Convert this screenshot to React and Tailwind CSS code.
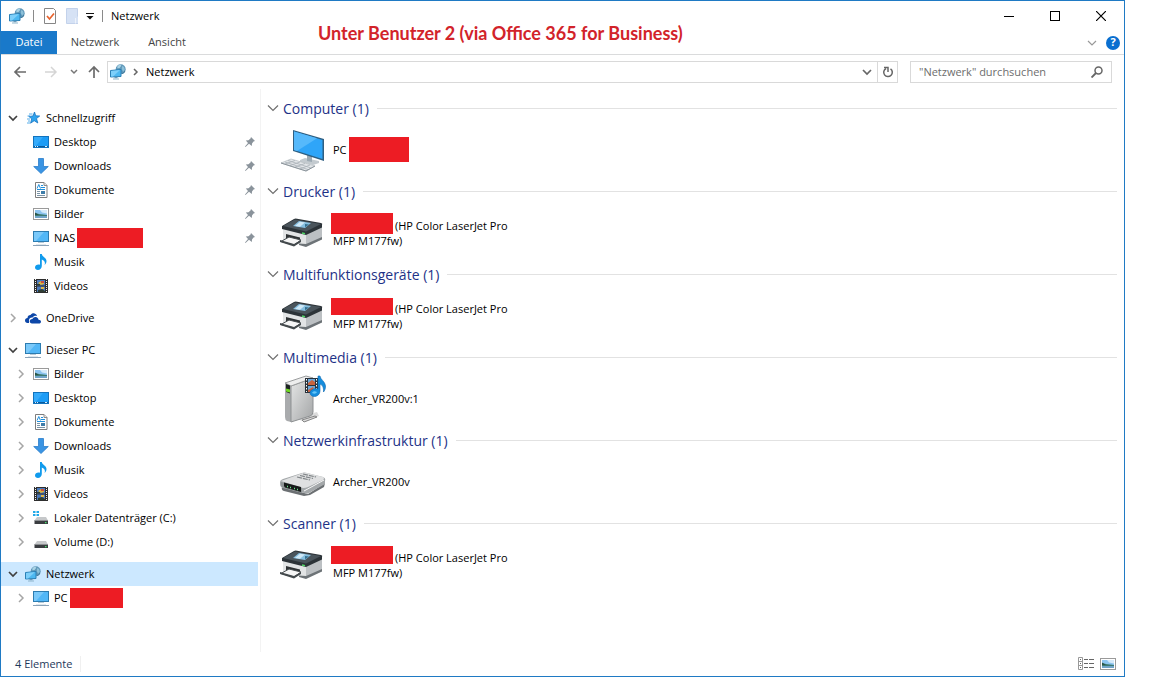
import React, { useState } from 'react';

const NetworkIcon = () => (
  <svg width="16" height="16" viewBox="0 0 16 16" className="shrink-0">
    <circle cx="10.7" cy="5.2" r="5" fill="#5f97b8" />
    <path d="M7.500 1.800l2.800-1.400 1 1.400-1.800 2.200-2.200.2z" fill="#a9d3e6" />
    <path d="M12 2l2 1 .8 2.500-1.600 2.300-1.400-2.600z" fill="#8cc0d9" />
    <path d="M12 9.500l1.800-.6 1-1.800" fill="none" stroke="#3f7697" />
    <path d="M.500 6.500l10.500-1v7L.500 13z" fill="#4db8f1" stroke="#2a7fb5" />
    <path d="M1 7l9-.9L3 12.400H1z" fill="#7dcffa" />
    <path d="M4.500 13h3v1.200h-3z" fill="#6b9ab8" />
    <path d="M3 14.500h6v1H3z" fill="#8fb4ca" />
  </svg>
);

const StarIcon = () => (
  <svg width="16" height="16" viewBox="0 0 16 16" className="shrink-0">
    <path d="M9.500 2l1.200 3.800 4 .2-3.200 2.600 1.300 4.400-3.600-2.300L5.600 13.200l1.100-4.400L3.800 6.400l4.200-.4z" fill="#2fa4ee" stroke="#1673c2" strokeWidth="0.800" />
    <path d="M4 4h3.500M2.500 6H5M2 9h3M3 11h2M2 13h3" stroke="#45a5e6" strokeWidth="0.900" />
  </svg>
);

const DesktopIcon = () => (
  <svg width="16" height="16" viewBox="0 0 16 16" className="shrink-0">
    <rect x="0.5" y="2.5" width="15" height="11" fill="#1c9cf6" stroke="#1273bd" />
    <path d="M1 3h9L3 12H1z" fill="#35abfb" />
    <path d="M1 12.500h14" stroke="#0b5a9b" />
    <path d="M2 12.500h1M4 12.500h1M12 12.500h2" stroke="#d8efff" />
  </svg>
);

const DownloadIcon = () => (
  <svg width="16" height="16" viewBox="0 0 16 16" className="shrink-0">
    <path d="M5.500.500h5v8h4.800L8 15.500.700 8.500h4.800z" fill="#3a94e3" stroke="#2a7ecb" strokeWidth="0.800" />
  </svg>
);

const DocumentIcon = () => (
  <svg width="16" height="16" viewBox="0 0 16 16" className="shrink-0">
    <path d="M2.500.500h8.500l3 3v12H2.500z" fill="#fff" stroke="#7d7d7d" />
    <path d="M11 .500v3h3" fill="#e9e9e9" stroke="#8c8c8c" />
    <path d="M4 6.500l1.800-4L7.500 6.500M8 3.500h2M8 5.500h4M4 7.500h8" fill="none" stroke="#1f8fdc" />
    <path d="M4 9.500h3M4 11.500h3M4 13.500h8" stroke="#7a93a6" />
    <path d="M8 9h4v3H8z" fill="#3f7da9" />
  </svg>
);

const PictureIcon = () => (
  <svg width="16" height="16" viewBox="0 0 16 16" className="shrink-0">
    <rect x="0.5" y="2.5" width="15" height="11" fill="#fff" stroke="#9a9a9a" />
    <path d="M2 4h12v8H2z" fill="#8cc4f0" />
    <path d="M7 4h7v3.500L9 6.500z" fill="#d5eafa" />
    <path d="M2 7l4 1 8 1v1H2z" fill="#3d7a72" />
    <path d="M2 6.500l4 2.500H2z" fill="#2a5348" />
    <path d="M2 10h12v2H2z" fill="#6fa3c8" />
  </svg>
);

const MonitorIcon = () => (
  <svg width="16" height="16" viewBox="0 0 16 16" className="shrink-0">
    <rect x="0.5" y="1.5" width="15" height="10" fill="#52b7f7" stroke="#2d7cb0" />
    <path d="M1 2h10L3 11H1z" fill="#7ac9fa" />
    <path d="M5 13h6v-1H5z" fill="#b9cbd8" />
    <path d="M0 15.500h16" stroke="#8ba3b8" />
    <path d="M3 14.500h10" stroke="#dfe7ed" />
  </svg>
);

const MusicIcon = () => (
  <svg width="16" height="16" viewBox="0 0 16 16" className="shrink-0">
    <path d="M7 0h1.800c.2 2.500 4.600 3.600 4.700 7 .1 1.700-.9 3.300-1.900 4 .9-2.500.1-4.500-2.800-5.500V12c0 2.200-1.700 4-3.900 4C3.200 16 2 15 2 13.500 2 11.800 3.600 10.500 5.500 10.500c.6 0 1.100.1 1.500.3z" fill="#119bed" />
  </svg>
);

const VideoIcon = () => (
  <svg width="16" height="16" viewBox="0 0 16 16" className="shrink-0">
    <path d="M1 1h14v14H1z" fill="#2e2e2e" />
    <path d="M2.500 1v14M13.500 1v14" stroke="#f2f2f2" strokeDasharray="1 1" />
    <path d="M4 2h8v5.500H4zM4 8.500h8V14H4z" fill="#4a79bd" />
    <path d="M5 5l3-2 3 1v2l-3 1z" fill="#d9b33d" />
    <path d="M8 3h3v2H8z" fill="#cb5040" />
    <path d="M4 6h3v1.500H4zM5 12l4-1 3 2v1H5z" fill="#2f3e33" />
    <path d="M8 9h3v2H8z" fill="#e0b84a" />
  </svg>
);

const CloudIcon = () => (
  <svg width="16" height="16" viewBox="0 0 16 16" className="shrink-0">
    <path d="M4 13H2.500C1 13 0 12 0 10.500 0 9 1 8 2.500 8c0-2 1.200-3 3-3C6.500 3.500 8 3 9.500 3.400c1.500.4 2.400 1.400 2.600 2.600-2-.5-3.600.2-4.500 1.500C5.500 7.200 4 8.600 4 10.500z" fill="#0d47a8" />
    <path d="M7 13.500c-1.400 0-2.300-.9-2.300-2.200 0-1.500 1.100-2.500 2.700-2.400C8 7.500 9.200 6.800 10.500 6.900c1.800.1 2.900 1.300 3 2.800 1.500 0 2.500.7 2.500 2 0 1.200-.9 1.800-2 1.800z" fill="#0d47a8" />
  </svg>
);

const DriveIcon = ({ system }) => (
  <svg width="16" height="16" viewBox="0 0 16 16" className="shrink-0">
    {system && <path d="M0 1h2.500v2H0zM3.500 1H6v2H3.500zM0 4h2.500v2H0zM3.500 4H6v2H3.500z" fill="#21a9e8" />}
    <path d="M4 7h9l2 3.500H1.500z" fill="#c6c8ca" />
    <path d="M1.500 10.500H15V14H1.500z" fill="#3a3d40" />
    <path d="M1.500 10.500H15" stroke="#8c8f92" />
    <path d="M12 12h1.500v1.200H12z" fill="#45e06a" />
  </svg>
);

const PinIcon = () => (
  <svg width="12" height="12" viewBox="0 0 12 12" className="shrink-0">
    <path d="M7 1l4 4-1.500.5L8 7.500l-.2 2.500L5 7.800 1.500 11 1 10.500 4 7 1.800 4.500l2.700-.2L6.500 2.500z" fill="#8a939b" />
  </svg>
);

const Chevron = ({ open }) => (
  <svg width="16" height="16" viewBox="0 0 16 16" fill="none" className="shrink-0">
    {open ? (
      <path d="M4 6l4 4 4-4" stroke="#404040" strokeWidth="1.700" />
    ) : (
      <path d="M6 4l4 4-4 4" stroke="#a6a6a6" strokeWidth="1.500" />
    )}
  </svg>
);

const ComputerLarge = () => (
  <svg width="48" height="48" viewBox="0 0 48 48" className="shrink-0">
    <path d="M20 34l5-2 14 3v2l-6 2-13-3z" fill="#c3cacf" />
    <path d="M27 29l5 1v6l-5-1z" fill="#9daab3" />
    <path d="M13 4l31 9v22L13 25z" fill="#2f5f82" />
    <path d="M14 5.500L42.500 14v19L14 24z" fill="#2fa5f8" />
    <path d="M14 5.500L37 12.300 17 25l-3-1z" fill="#56b9fb" />
    <path d="M11 33l24 7-9 5-25-8z" fill="#e3e6e9" stroke="#b3babf" strokeWidth="0.7" />
    <path d="M8 34.500l23 7.500M5 36l23 7.500M15 34.500L5 38M20 36l-10 3.500M25 37.500L15 41M30 39l-10 4" stroke="#a9b1b7" strokeWidth="0.8" />
    <path d="M1 37l25 8 9-5" fill="none" stroke="#8b949b" />
  </svg>
);

const PrinterLarge = () => (
  <svg width="48" height="48" viewBox="0 0 48 48" className="shrink-0">
    <path d="M3 19l23 5v13L3 31z" fill="#e2e4e5" />
    <path d="M26 24l16-7v13L26 37z" fill="#bcc0c3" />
    <path d="M26 35l16-7v2.500L26 38l-7-2v-1.500z" fill="#6d7377" />
    <path d="M2 17l12-7q1-.6 3-.3L41 14q2 .5 1 2v2.500L26 26 2 20z" fill="#2c3338" />
    <path d="M3 17l12-6.500L41 15l-15 7.500z" fill="#4a545b" />
    <path d="M19 12l12 2-6 5-12-2z" fill="#86bfe0" />
    <path d="M20 12.700l5 .9-5 4.200-5-.8z" fill="#cfe8f6" />
    <path d="M25 15l4 .6-4 2.600z" fill="#34708f" />
    <path d="M6 25l14 3.500v4L6 29z" fill="#2f3335" />
    <path d="M9 28l12 3-7 5-13-3.500z" fill="#f6f6f6" stroke="#444a4d" />
    <path d="M0 31l14 4 7-4v2l-7 4.500L0 33z" fill="#444a4d" />
    <path d="M22 24l3 .7" stroke="#51d666" strokeWidth="1.500" />
  </svg>
);

const MediaLarge = () => (
  <svg width="48" height="48" viewBox="0 0 48 48" className="shrink-0">
    <defs>
      <linearGradient id="boxSide" x1="0" y1="0" x2="1" y2="1">
        <stop offset="0" stopColor="#e6e7e7" />
        <stop offset="1" stopColor="#a3a5a6" />
      </linearGradient>
    </defs>
    <path d="M26 40l11-3 2 4-14 6-8-3z" fill="#dcdcdc" />
    <path d="M22 45l13-4 2 1-13 5z" fill="none" stroke="#858585" />
    <path d="M5 8l6 2v37l-4-1q-2-1-2-4z" fill="#a9abad" />
    <path d="M11 11l22-8v34q0 3-3 4l-19 6z" fill="url(#boxSide)" stroke="#8d9092" />
    <path d="M5 8l21-7 7 2-22 8z" fill="#eee" stroke="#9b9d9e" />
    <path d="M6 9l4 1.500v8L6 17z" fill="#1f2523" />
    <path d="M6 13.500l4 1v3l-4-1z" fill="#70d723" />
    <path d="M25 3h13v15H25z" fill="#29323b" />
    <path d="M26.500 4v13M36.500 4v13" stroke="#fff" strokeDasharray="1.500 1.500" />
    <path d="M28 4h7v6h-7zM28 11h7v6h-7z" fill="#6ea8d9" />
    <path d="M28 8l4-3 3 2v3h-7zM28 15l5-3 2 5h-7z" fill="#c9633e" />
    <path d="M38 1h2c.5 4 5 5 5.500 10 .2 2.500-1 5-2 6 .3-4-.5-7-3.500-8v7c0 3-2.500 5.500-5.500 5.500-2.500 0-4.500-1.500-4.500-3.500 0-3 3.500-5 8-4z" fill="#168ddd" stroke="#0c68b2" strokeWidth="0.6" />
    <path d="M32 18c1-2 3-2 5-1-1 2-3 2-5 1z" fill="#65c6fa" />
  </svg>
);

const RouterLarge = () => (
  <svg width="48" height="48" viewBox="0 0 48 48" className="shrink-0">
    <path d="M2 29l26 7 17-11-1 4-14 8-6 1-20-5q-3-1-2-4z" fill="#6c7073" />
    <path d="M0 24q0-2 3-3l19-6q2-1 5 0l16 4q3 1 2 4v3L29 35q-2 1-5 0L3 30q-3-1-3-4z" fill="#a4a8aa" />
    <path d="M1 23l22-8q2-1 4 0l16 4q2 1 0 3l-15 7q-2 1-5 1z" fill="#dfe0e1" />
    <path d="M1 24l21 6v5L4 30q-3-1-3-3z" fill="#8f9496" />
    <path d="M4 24.500l17 4.500v5L5 29.500q-1-1-1-2z" fill="#151918" />
    <path d="M7 28.500h1M10 29.500h1M14 30.500h1M17 31.500h1" stroke="#6ce08a" strokeWidth="1.500" />
    <path d="M17 19l13 3M20 17.500l13 3M23 16l13 3" stroke="#7f8487" strokeWidth="1.200" strokeDasharray="5 1" />
    <path d="M24 33l20-11" stroke="#f7f7f7" />
  </svg>
);

const quickAccess = [
  { label: 'Desktop', Icon: DesktopIcon, pinned: true },
  { label: 'Downloads', Icon: DownloadIcon, pinned: true },
  { label: 'Dokumente', Icon: DocumentIcon, pinned: true },
  { label: 'Bilder', Icon: PictureIcon, pinned: true },
  { label: 'NAS', Icon: MonitorIcon, pinned: true, mask: 'w-[66px]' },
  { label: 'Musik', Icon: MusicIcon },
  { label: 'Videos', Icon: VideoIcon },
];

const thisPc = [
  { label: 'Bilder', Icon: PictureIcon },
  { label: 'Desktop', Icon: DesktopIcon },
  { label: 'Dokumente', Icon: DocumentIcon },
  { label: 'Downloads', Icon: DownloadIcon },
  { label: 'Musik', Icon: MusicIcon },
  { label: 'Videos', Icon: VideoIcon },
  { label: 'Lokaler Datenträger (C:)', Icon: () => <DriveIcon system /> },
  { label: 'Volume (D:)', Icon: DriveIcon },
];

const tree = [
  { label: 'Schnellzugriff', Icon: StarIcon, open: true, children: quickAccess, leaf: true },
  { label: 'OneDrive', Icon: CloudIcon, children: [] },
  { label: 'Dieser PC', Icon: MonitorIcon, open: true, children: thisPc },
  {
    label: 'Netzwerk',
    Icon: NetworkIcon,
    open: true,
    selected: true,
    children: [{ label: 'PC', Icon: MonitorIcon, mask: 'w-[53px]' }],
  },
];

const groups = [
  { title: 'Computer', Icon: ComputerLarge, name: 'PC', mask: 'w-[60px] h-[25px]' },
  { title: 'Drucker', Icon: PrinterLarge, printer: true, mask: 'w-[62px] h-[21px]' },
  { title: 'Multifunktionsgeräte', Icon: PrinterLarge, printer: true, mask: 'w-[62px] h-[17px]' },
  { title: 'Multimedia', Icon: MediaLarge, name: 'Archer_VR200v:1' },
  { title: 'Netzwerkinfrastruktur', Icon: RouterLarge, name: 'Archer_VR200v' },
  { title: 'Scanner', Icon: PrinterLarge, printer: true, mask: 'w-[62px] h-[18px]' },
];

const TitleBar = () => (
  <header className="flex h-[30px] items-center gap-2 pl-2">
    <NetworkIcon />
    <span className="h-3 w-px bg-[#8a8a8a]" />
    <button aria-label="Eigenschaften">
      <svg width="16" height="16" viewBox="0 0 16 16">
        <path d="M2.500.500h9l2 2v13h-11z" fill="#fff" stroke="#868686" />
        <path d="M5 8l2.500 3L12 5.500" fill="none" stroke="#e8622c" strokeWidth="1.700" />
      </svg>
    </button>
    <button aria-label="Neuer Ordner">
      <svg width="12" height="16" viewBox="0 0 12 16">
        <path d="M.500.500h11v8l1 1v6H.500z" fill="#d6e2f5" stroke="#c3d2eb" />
        <path d="M9.500 10v5.500" stroke="#eef3fb" />
      </svg>
    </button>
    <button aria-label="Symbolleiste anpassen">
      <svg width="8" height="8" viewBox="0 0 8 8">
        <path d="M0 1.500h8" stroke="#111" />
        <path d="M.500 4h7L4 7.500z" fill="#111" />
      </svg>
    </button>
    <span className="h-3 w-px bg-[#8a8a8a]" />
    <h1>Netzwerk</h1>
    <div className="ml-auto flex h-full">
      <button aria-label="Minimieren" className="flex w-[46px] items-center justify-center">
        <svg width="10" height="10" viewBox="0 0 10 10"><path d="M0 5.500h10" stroke="#000" /></svg>
      </button>
      <button aria-label="Maximieren" className="flex w-[46px] items-center justify-center">
        <svg width="10" height="10" viewBox="0 0 10 10"><rect x="0.5" y="0.5" width="9" height="9" fill="none" stroke="#000" /></svg>
      </button>
      <button aria-label="Schließen" className="flex w-[46px] items-center justify-center">
        <svg width="10" height="10" viewBox="0 0 10 10"><path d="M0 0l10 10M10 0L0 10" stroke="#000" strokeWidth="1.200" /></svg>
      </button>
    </div>
  </header>
);

const Ribbon = () => (
  <div className="flex h-6 border-b border-[#dadbdc] text-[#444]">
    <button className="w-14 bg-[#1979ca] text-white">Datei</button>
    <button className="w-[76px]">Netzwerk</button>
    <button className="w-[68px]">Ansicht</button>
    <div className="ml-auto flex items-center gap-2 pr-1">
      <button aria-label="Menüband einblenden">
        <svg width="12" height="12" viewBox="0 0 12 12"><path d="M2 4l4 4 4-4" fill="none" stroke="#999" strokeWidth="1.200" /></svg>
      </button>
      <button
        aria-label="Hilfe"
        className="flex size-[14px] items-center justify-center rounded-full bg-[#0a6fd0] text-[11px] font-bold text-white"
      >
        ?
      </button>
    </div>
  </div>
);

const AddressBar = () => (
  <div className="flex h-[34px] items-center pr-3">
    <div className="flex w-[106px] items-center justify-between pr-[6px] pl-3">
      <button aria-label="Zurück">
        <svg width="14" height="14" viewBox="0 0 14 14"><path d="M13 7H2M7 2L2 7l5 5" fill="none" stroke="#6b6b6b" strokeWidth="1.700" /></svg>
      </button>
      <button aria-label="Vorwärts" className="ml-2">
        <svg width="14" height="14" viewBox="0 0 14 14"><path d="M1 7h11M7 2l5 5-5 5" fill="none" stroke="#d5d5d5" strokeWidth="1.500" /></svg>
      </button>
      <button aria-label="Zuletzt besuchte Orte" className="ml-1">
        <svg width="8" height="8" viewBox="0 0 8 8"><path d="M1 2l3 3 3-3" fill="none" stroke="#777" strokeWidth="1.500" /></svg>
      </button>
      <button aria-label="Nach oben">
        <svg width="14" height="14" viewBox="0 0 14 14"><path d="M7 13V2M2 7l5-5 5 5" fill="none" stroke="#6b6b6b" strokeWidth="1.700" /></svg>
      </button>
    </div>
    <div className="flex h-[22px] grow items-center border border-[#d9d9d9] pl-[2px]">
      <NetworkIcon />
      <svg width="8" height="8" viewBox="0 0 8 8" className="mx-[6px]"><path d="M2 1l3 3-3 3" fill="none" stroke="#666" strokeWidth="1.500" /></svg>
      <button>Netzwerk</button>
      <button aria-label="Vorherige Orte" className="ml-auto flex h-full w-5 items-center justify-center">
        <svg width="10" height="10" viewBox="0 0 10 10"><path d="M1 3l4 4 4-4" fill="none" stroke="#666" strokeWidth="1.700" /></svg>
      </button>
      <button aria-label="Aktualisieren" className="flex h-full w-5 items-center justify-center border-l border-[#d9d9d9]">
        <svg width="12" height="12" viewBox="0 0 12 12">
          <path d="M8.500 2.800A4.300 4.300 0 1 1 4 2.500" fill="none" stroke="#666" strokeWidth="1.500" />
          <path d="M2 1.500h4V6" fill="none" stroke="#666" strokeWidth="1.500" />
        </svg>
      </button>
    </div>
    <label className="ml-3 flex h-[22px] w-[202px] items-center border border-[#d9d9d9] pr-2 pl-2">
      <input
        type="search"
        aria-label="Netzwerk durchsuchen"
        placeholder={'"Netzwerk" durchsuchen'}
        className="min-w-0 grow bg-transparent outline-none placeholder:text-[#6d6d6d]"
      />
      <svg width="12" height="12" viewBox="0 0 12 12">
        <circle cx="7.5" cy="4.5" r="3.5" fill="none" stroke="#666" strokeWidth="1.500" />
        <path d="M5 7L.500 11.500" stroke="#666" strokeWidth="1.900" />
      </svg>
    </label>
  </div>
);

const TreeRow = ({ item, child, leaf, open, onToggle }) => {
  const { label, Icon, mask, pinned, selected } = item;
  return (
    <div className={`mr-[2px] flex h-6 items-center ${child ? 'pl-3' : 'pl-1'} ${selected ? 'bg-[#cce8ff]' : ''}`}>
      {leaf ? (
        <span className="w-4" />
      ) : (
        <button aria-label={`${label} umschalten`} aria-expanded={!!open} onClick={onToggle}>
          <Chevron open={open} />
        </button>
      )}
      <a href="#" className="ml-1 flex items-center gap-[5px] whitespace-nowrap">
        <Icon />
        {label}
      </a>
      {mask && <span className={`ml-[2px] h-5 bg-[#ed1c24] ${mask}`} />}
      {pinned && (
        <span className="mr-[2px] ml-auto">
          <PinIcon />
        </span>
      )}
    </div>
  );
};

const TreeSection = ({ section }) => {
  const [open, setOpen] = useState(!!section.open);
  return (
    <li>
      <TreeRow item={section} open={open} onToggle={() => setOpen(!open)} />
      {open && (
        <ul>
          {section.children.map((item) => (
            <li key={item.label}>
              <TreeRow item={item} child leaf={section.leaf} />
            </li>
          ))}
        </ul>
      )}
    </li>
  );
};

const DeviceGroup = ({ group }) => {
  const { title, Icon, name, printer, mask } = group;
  const [open, setOpen] = useState(true);
  return (
    <section>
      <h2 className="flex h-6 items-center gap-2 pr-[7px] pl-[6px] text-[14px] text-[#1e3287]">
        <button className="flex items-center gap-1 whitespace-nowrap" aria-expanded={open} onClick={() => setOpen(!open)}>
          <svg width="12" height="12" viewBox="0 0 12 12"><path d="M1 3.500l5 5 5-5" fill="none" stroke="#707070" strokeWidth="1.200" /></svg>
          {title} (1)
        </button>
        <span className="h-px grow bg-[#e2e2e2]" />
      </h2>
      {open && (
        <div className="flex h-[59px] items-center gap-[5px] pl-[19px] leading-[15px]">
          <Icon />
          {printer ? (
            <p className="whitespace-nowrap">
              <span className="-ml-[2px] flex h-[15px] items-center gap-[2px]">
                <span className={`-mt-1 shrink-0 bg-[#ed1c24] ${mask}`} />
                (HP Color LaserJet Pro
              </span>
              MFP M177fw)
            </p>
          ) : (
            <p className="flex items-center gap-[2px]">
              {name}
              {mask && <span className={`bg-[#ed1c24] ${mask}`} />}
            </p>
          )}
        </div>
      )}
    </section>
  );
};

const StatusBar = () => (
  <footer className="flex h-6 items-center pr-2 pl-[14px] text-[#1e395b]">
    <span>4 Elemente</span>
    <span className="ml-2 h-4 w-px bg-[#f0f0f0]" />
    <div className="ml-auto flex items-center gap-[6px]">
      <button aria-label="Details">
        <svg width="16" height="14" viewBox="0 0 16 14">
          <path d="M.500.500h4v12h-4zM.500 4.500h4M.500 8.500h4" fill="none" stroke="#999" />
          <path d="M2 2.500h1M2 6.500h1M2 10.500h1M6 2.500h4M11 2.500h5M6 6.500h4M11 6.500h5M6 10.500h4M11 10.500h5" stroke="#666" />
        </svg>
      </button>
      <button aria-label="Große Symbole">
        <PictureIcon />
      </button>
    </div>
  </footer>
);

const App = () => (
  <div className="flex min-h-screen bg-white pr-[27px] font-['Open_Sans','Noto_Sans',sans-serif] text-[11px] text-black">
    <div className="relative flex grow flex-col border border-[#1f7ac4]">
      <TitleBar />
      <Ribbon />
      <AddressBar />
      <p className="absolute top-5 left-[317px] font-['Lato',sans-serif] text-[18px] leading-6 font-bold whitespace-nowrap text-[#d2232a]">
        Unter Benutzer 2 (via Office 365 for Business)
      </p>
      <div className="flex grow">
        <nav className="w-[260px] shrink-0 border-r border-[#f3f3f3] pt-[17px]">
          <ul className="flex flex-col gap-2">
            {tree.map((section) => (
              <TreeSection key={section.label} section={section} />
            ))}
          </ul>
        </nav>
        <main className="grow pt-[7px]">
          {groups.map((group) => (
            <DeviceGroup key={group.title} group={group} />
          ))}
        </main>
      </div>
      <StatusBar />
    </div>
  </div>
);

export default App;
